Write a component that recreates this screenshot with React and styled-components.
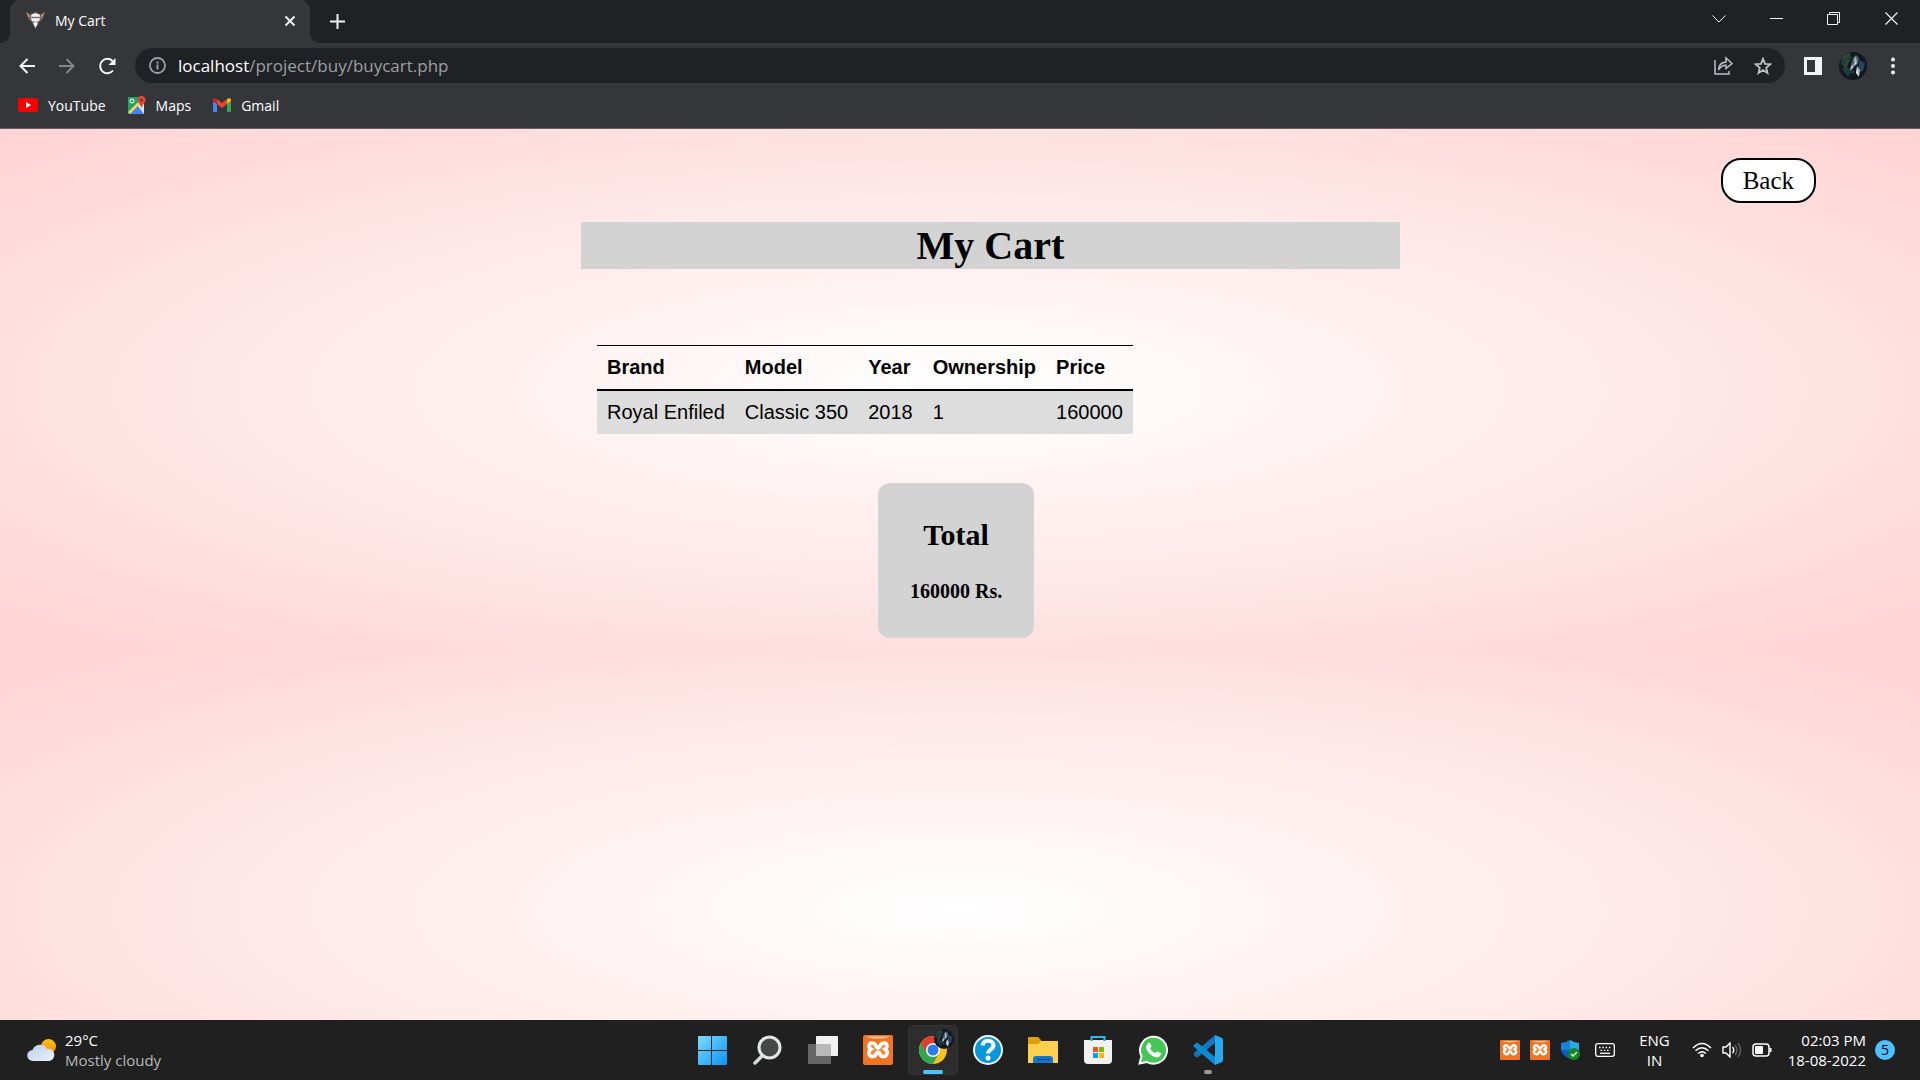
import React from "react";
import styled, { createGlobalStyle } from "styled-components";

const ui = '"Open Sans", "Noto Sans", sans-serif';
const serif = '"Liberation Serif", "Times New Roman", serif';
const sans = '"Liberation Sans", Arial, sans-serif';

const Global = createGlobalStyle`
  * { box-sizing: border-box; }
  body { margin: 0; background: #202124; }
  button { border: 0; background: none; padding: 0; font: inherit; color: inherit; cursor: pointer; }
  a { color: inherit; text-decoration: none; }
  h1, h2, p { margin: 0; }
  svg { display: block; flex: none; }
`;

const Screen = styled.div`
  min-height: 100vh;
  display: flex;
  flex-direction: column;
  font-family: ${ui};
`;

const TabStrip = styled.header`
  display: flex;
  align-items: stretch;
  height: 43px;
  padding-left: 10px;
  background: #202124;
  color: #fff;
`;

const Tab = styled.div`
  position: relative;
  display: flex;
  align-items: center;
  gap: 10px;
  width: 300px;
  padding: 0 11px 2px 16px;
  border-radius: 10px 10px 0 0;
  background: #35363a;
  font-size: 14px;
  &::before, &::after {
    content: "";
    position: absolute;
    bottom: 0;
    width: 10px;
    height: 10px;
  }
  &::before { left: -10px; background: radial-gradient(circle at 0 0, transparent 10px, #35363a 10px); }
  &::after { right: -10px; background: radial-gradient(circle at 100% 0, transparent 10px, #35363a 10px); }
`;

const TabTitle = styled.span`
  flex: 1;
`;

const IconButton = styled.button`
  display: grid;
  place-items: center;
  width: ${(p) => p.$w || 40}px;
  height: ${(p) => p.$h || 32}px;
  color: ${(p) => p.$color || "#f1f3f4"};
`;

const WindowControls = styled.div`
  display: flex;
  margin-left: auto;
`;

const Toolbar = styled.div`
  display: flex;
  align-items: center;
  height: 45px;
  padding: 0 7px;
  background: #35363a;
`;

const Address = styled.div`
  flex: 1;
  display: flex;
  align-items: center;
  height: 35px;
  margin: 0 8px;
  padding: 0 2px 0 14px;
  border-radius: 18px;
  background: #202124;
`;

const Url = styled.p`
  flex: 1;
  margin-left: 12px;
  font-size: 17px;
  line-height: 24px;
  color: #9aa0a6;
  b { font-weight: 400; color: #fff; }
`;

const Bookmarks = styled.nav`
  display: flex;
  align-items: center;
  gap: 22px;
  height: 41px;
  padding: 0 18px 6px;
  border-bottom: 1px solid #5f6265;
  background: #35363a;
  color: #fff;
  font-size: 14px;
`;

const Bookmark = styled.a`
  display: flex;
  align-items: center;
  gap: 10px;
`;

const Page = styled.main`
  flex: 1;
  display: flex;
  flex-direction: column;
  padding: 29px 8px 0;
  background: radial-gradient(#ffffff, #ffd3d3) 0 0 / 100% 520px repeat;
  font-family: ${serif};
  color: #000;
`;

const BackLink = styled.a`
  align-self: flex-end;
  margin-right: 96px;
  padding: 6px 20px;
  border: 2px solid #000;
  border-radius: 20px;
  background: #fff;
  font-size: 25px;
  line-height: 29px;
`;

const Title = styled.h1`
  width: 43%;
  margin: 19px 0 0 573px;
  background: lightgray;
  font-size: 40px;
  line-height: 47px;
  text-align: center;
`;

const CartTable = styled.table`
  align-self: flex-start;
  margin: 76px 0 0 589px;
  border-spacing: 0;
  font-family: ${sans};
  font-size: 20px;
  line-height: 23px;
  th, td { padding: 10px; text-align: left; }
  th { border-top: 1px solid #000; border-bottom: 2px solid #000; }
  td { background: #ddd; }
`;

const TotalCard = styled.section`
  align-self: flex-start;
  margin: 49px 0 0 870px;
  padding: 34px 32px 35px;
  border-radius: 12px;
  background: lightgray;
  text-align: center;
  h2 { font-size: 30px; line-height: 35px; }
  p { margin-top: 27px; font-size: 20px; line-height: 24px; font-weight: 700; }
`;

const Taskbar = styled.footer`
  display: grid;
  grid-template-columns: 1fr auto 1fr;
  align-items: center;
  height: 60px;
  background: #202020;
  color: #fff;
  font-size: 15px;
  line-height: 20px;
`;

const Weather = styled.button`
  display: flex;
  align-items: center;
  gap: 8px;
  padding-left: 27px;
  text-align: left;
`;

const Muted = styled.span`
  color: #b8b8b8;
`;

const Stack = styled.span`
  display: flex;
  flex-direction: column;
  text-align: ${(p) => p.$align || "left"};
`;

const Apps = styled.div`
  display: flex;
  gap: 5px;
`;

const AppButton = styled.button`
  position: relative;
  display: grid;
  place-items: center;
  width: 50px;
  height: 50px;
  border-radius: 5px;
  background: ${(p) => (p.$active ? "#2d2d2d" : "transparent")};
  box-shadow: ${(p) => (p.$active ? "inset 0 0 0 1px #353535" : "none")};
  &::after {
    content: "";
    position: absolute;
    bottom: 1px;
    width: ${(p) => (p.$active ? 20 : p.$running ? 8 : 0)}px;
    height: 4px;
    border-radius: 2px;
    background: ${(p) => (p.$active ? "#4cc2ff" : "#9a9a9a")};
  }
`;

const Tray = styled.div`
  display: flex;
  align-items: center;
  justify-content: flex-end;
  gap: 9px;
  padding-right: 25px;
`;

const TrayGroup = styled.div`
  display: flex;
  align-items: center;
  gap: 10px;
  margin-left: ${(p) => p.$start || 0}px;
  margin-right: ${(p) => p.$end || 0}px;
`;

const Badge = styled.span`
  display: grid;
  place-items: center;
  width: 20px;
  height: 20px;
  border-radius: 50%;
  background: #4cc2ff;
  color: #000;
  font-size: 14px;
`;

const Svg = ({ s = 20, w, h, box, children }) => (
  <svg width={w || s} height={h || s} viewBox={box || `0 0 ${w || s} ${h || s}`} fill="none" aria-hidden="true">{children}</svg>
);

const Avatar = ({ s }) => (
  <Svg s={s} box="0 0 28 28">
    <defs><clipPath id={`av${s}`}><circle cx="14" cy="14" r="14" /></clipPath></defs>
    <g clipPath={`url(#av${s})`}>
      <path fill="#101820" d="M0 0h28v28H0z" />
      <path fill="#1d3c40" d="M2 5l8-4 3 5-5 5-6 2zM3 17l5-3 4 6-3 5z" />
      <path fill="#33452f" d="M3 3l9-2-2 4-5 2zM4 12l4-2 1 4-4 2z" />
      <path fill="#28425e" d="M20 8l6 3-2 8-5 2z" />
      <path fill="#50656f" d="M14 6l3-3 3 3-1 5-3 3-5 5 1-6z" />
      <path fill="#a9b9c3" d="M16 4l2 5-1 3-2-3zM18 14l3 4-1 6-3-4zM12 14l3-2-1 4-3 3z" />
      <path fill="#e2e9ee" d="M18 17l1 3 1 5-3-4zM16 10l2 2-3 1z" />
      <path fill="#3b5236" d="M8 8l3 1-3 3zM12 20l3-2-1 4z" />
    </g>
  </Svg>
);

const Xampp = ({ s }) => (
  <Svg s={s} box="0 0 30 30">
    <rect width="30" height="30" rx="2" fill="#ef7524" />
    <path d="M4 1.500h22q-2 2-11 2T4 1.500z" fill="#ffc59d" />
    <path d="M11 8.500C6 6 4.500 12 8 14c-4 3-2 8 2.500 7.500C14 21 12.500 17 15 17s1 4 4.500 4.500C24 22 26 17 22 14c3.500-2 2-8-3-5.500-3 1-1.500 4.500-4 4.500s-1-3.500-4-4.500z" fill="#f58a43" stroke="#fff" strokeWidth="3.500" />
  </Svg>
);

const Chrome = () => (
  <Svg s={30} box="-1 1 30 30">
    <circle cx="14" cy="16" r="14" fill="#fbc116" />
    <path d="M14 16L1.900 9A14 14 0 0 0 14 30l6-10.500z" fill="#2da94f" />
    <path d="M1.900 9A14 14 0 0 1 26.100 9H14v7l-6 3.500z" fill="#e33b2e" />
    <circle cx="14" cy="16" r="7" fill="#fff" />
    <circle cx="14" cy="16" r="5.500" fill="#2a7de9" />
  </Svg>
);

const ChromeAvatar = styled.span`
  position: absolute;
  top: 4px;
  right: 4px;
`;

export default function App() {
  return (
    <Screen>
      <Global />
      <TabStrip>
        <Tab>
          <Svg s={19} box="0 0 19 19">
            <path fill="#b88765" d="M0 1l5 3 1 5-4-3zM19 1l-5 3-1 5 4-3z" />
            <path fill="#8d6a55" d="M2 6l3 2 1 3-3-2zM17 6l-3 2-1 3 3-2z" />
            <path fill="#554d58" d="M4.500 3l5-3 5 3 1 4-2.500 5-3.500 6.500L6 12 3.500 7z" />
            <path fill="#f2f2f2" d="M5.500 3.500l4-1.500 4 1.500 1 3-1.500 4h-7l-1.500-4zM7 12l2.500-1.500L12 12l-2.500 5z" />
            <path stroke="#77717a" strokeWidth="1.500" d="M5 6.500h9" />
          </Svg>
          <TabTitle>My Cart</TabTitle>
          <IconButton $w={18} $h={18} aria-label="Close tab">
            <Svg s={12}><path d="M1.500 1.500l9 9m0-9l-9 9" stroke="currentColor" strokeWidth="2" /></Svg>
          </IconButton>
        </Tab>
        <IconButton $w={54} $h={42} aria-label="New tab">
          <Svg s={15}><path d="M7.500 0v15M0 7.500h15" stroke="currentColor" strokeWidth="2" /></Svg>
        </IconButton>
        <WindowControls>
          <IconButton $w={58} $h={37} aria-label="Search tabs"><Svg w={14} h={8}><path d="M.5.5L7 7 13.500.5" stroke="currentColor" /></Svg></IconButton>
          <IconButton $w={57} $h={37} aria-label="Minimize"><Svg w={13} h={1}><path d="M0 .5h13" stroke="currentColor" /></Svg></IconButton>
          <IconButton $w={57} $h={37} aria-label="Restore"><Svg s={13}><path d="M.5 2.500h10v10H.5zM2.500 2.500v-2h10v10h-2" stroke="currentColor" /></Svg></IconButton>
          <IconButton $w={58} $h={37} aria-label="Close"><Svg s={13}><path d="M.5.5l12 12m0-12l-12 12" stroke="currentColor" strokeWidth="1.200" /></Svg></IconButton>
        </WindowControls>
      </TabStrip>
      <Toolbar>
        <IconButton aria-label="Back"><Svg s={16}><path d="M16 8H1.500M8.500 1l-7 7 7 7" stroke="currentColor" strokeWidth="2" /></Svg></IconButton>
        <IconButton $color="#85868a" aria-label="Forward"><Svg s={16}><path d="M0 8h14.500M7.500 1l7 7-7 7" stroke="currentColor" strokeWidth="2" /></Svg></IconButton>
        <IconButton aria-label="Reload"><Svg s={18}><path d="M15 13.500A7.200 7.200 0 1 1 14.500 4" stroke="currentColor" strokeWidth="2" /><path d="M17.500 1v7h-7z" fill="currentColor" /></Svg></IconButton>
        <Address>
          <Svg s={17}><circle cx="8.500" cy="8.500" r="7.500" stroke="#9aa0a6" strokeWidth="1.800" /><path d="M8.500 7.500v5M8.500 4.500v2" stroke="#9aa0a6" strokeWidth="2" /></Svg>
          <Url><b>localhost</b>/project/buy/buycart.php</Url>
          <IconButton $color="#bdc1c6" aria-label="Share"><Svg s={19}><path d="M1 4v14h14v-3" stroke="currentColor" strokeWidth="1.500" /><path d="M4.500 14c.2-5 2.500-7.500 7.500-8V2l6 5.500-6 5V9.200c-3.500 0-5.500 1.300-7.500 4.800z" stroke="currentColor" strokeWidth="1.500" /></Svg></IconButton>
          <IconButton $color="#bdc1c6" aria-label="Bookmark"><Svg s={18}><path d="M9 1.800l2 5 5.300.4-4.100 3.500 1.300 5.300L9 13.100 4.500 16l1.300-5.300-4.100-3.500L7 6.800z" stroke="currentColor" strokeWidth="1.800" /></Svg></IconButton>
        </Address>
        <IconButton aria-label="Side panel"><Svg s={18}><path d="M0 0h18v18H0zM3 3v12h8V3z" fillRule="evenodd" fill="currentColor" /></Svg></IconButton>
        <IconButton aria-label="Profile"><Avatar s={28} /></IconButton>
        <IconButton aria-label="Menu"><Svg w={4} h={18}><g fill="currentColor"><circle cx="2" cy="2.500" r="2" /><circle cx="2" cy="9" r="2" /><circle cx="2" cy="15.500" r="2" /></g></Svg></IconButton>
      </Toolbar>
      <Bookmarks>
        <Bookmark href="#youtube"><Svg w={20} h={14}><rect width="20" height="14" rx="3" fill="#f00" /><path d="M8 4l5 3-5 3z" fill="#fff" /></Svg>YouTube</Bookmark>
        <Bookmark href="#maps"><Svg s={18}><path fill="#1fa463" d="M0 1h16v17H0z" /><path fill="#4285f4" d="M9 9l7 9H1z" /><path fill="#dfe3e8" d="M9 9l7-2v11z" /><path stroke="#ffd54b" strokeWidth="2.500" d="M1 17L12 6" /><circle cx="4" cy="5" r="2" stroke="#fff" /><path fill="#dd4b3e" d="M13.500 0A4 4 0 0 0 9.500 4c0 3 3 4 4 8 1-4 4-5 4-8a4 4 0 0 0-4-4z" /><circle cx="13.500" cy="4" r="1.500" fill="#822b23" /></Svg>Maps</Bookmark>
        <Bookmark href="#gmail"><Svg w={18} h={14}><path fill="#4285f4" d="M0 3l4 3v8H1q-1 0-1-1z" /><path fill="#34a853" d="M18 3l-4 3v8h3q1 0 1-1z" /><path fill="#ea4335" d="M4 1l5 4 5-4v5l-5 4-5-4z" /><path fill="#c5221f" d="M0 2c0-2 2-2.500 4-1v5L0 3z" /><path fill="#fbbc04" d="M18 2c0-2-2-2.500-4-1v5l4-3z" /></Svg>Gmail</Bookmark>
      </Bookmarks>
      <Page>
        <BackLink href="#back">Back</BackLink>
        <Title>My Cart</Title>
        <CartTable>
          <thead><tr><th>Brand</th><th>Model</th><th>Year</th><th>Ownership</th><th>Price</th></tr></thead>
          <tbody><tr><td>Royal Enfiled</td><td>Classic 350</td><td>2018</td><td>1</td><td>160000</td></tr></tbody>
        </CartTable>
        <TotalCard><h2>Total</h2><p>160000 Rs.</p></TotalCard>
      </Page>
      <Taskbar>
        <Weather>
          <Svg w={30} h={24}>
            <defs><linearGradient id="cloud" x2="1" y2="1"><stop stopColor="#b9cdec" /><stop offset="1" stopColor="#edf3fb" /></linearGradient><linearGradient id="sun" x2="0" y2="1"><stop stopColor="#ffc21a" /><stop offset="1" stopColor="#f38a06" /></linearGradient></defs>
            <circle cx="21.500" cy="8.500" r="7.500" fill="url(#sun)" />
            <path d="M6 23a5.500 5.500 0 0 1-.5-11A8 8 0 0 1 20 11a6 6 0 0 1 2.500 12z" fill="url(#cloud)" />
          </Svg>
          <Stack><span>29°C</span><Muted>Mostly cloudy</Muted></Stack>
        </Weather>
        <Apps>
          <AppButton aria-label="Start"><Svg s={30} box="1 0 30 30"><defs><linearGradient id="win" x2="1" y2="1"><stop stopColor="#7bdcff" /><stop offset="1" stopColor="#0c93f5" /></linearGradient></defs><path fill="url(#win)" d="M1 2q0-1 1-1h12v14H1zM15 1h14q1 0 1 1v13H15zM1 16h13v14H2q-1 0-1-1zM15 16h15v13q0 1-1 1H15z" /></Svg></AppButton>
          <AppButton aria-label="Search"><Svg s={30}><path d="M9 21l-7 7" stroke="#d4d9dc" strokeWidth="3.500" strokeLinecap="round" /><circle cx="16.500" cy="12.500" r="10.500" fill="#474747" stroke="#e3e6e8" strokeWidth="3" /></Svg></AppButton>
          <AppButton aria-label="Task view"><Svg s={30}><rect y="9" width="23" height="20" rx="1" fill="#666" /><rect x="8" y="1" width="22" height="20" rx="1" fill="#f1f1f1" /><path fill="#b9b9b9" d="M8 9h15v12H8z" /></Svg></AppButton>
          <AppButton aria-label="XAMPP"><Xampp s={30} /></AppButton>
          <AppButton $active aria-label="Chrome"><Chrome /><ChromeAvatar><Avatar s={20} /></ChromeAvatar></AppButton>
          <AppButton aria-label="Help"><Svg s={30}><circle cx="15" cy="15" r="14" fill="#0795dc" stroke="#eef5f8" strokeWidth="2" /><path d="M9.500 10.500C10 4 20.500 4.500 20.500 10.500c0 4-5.500 4-5.500 8" stroke="#fff" strokeWidth="4" /><circle cx="15" cy="23" r="2.500" fill="#fff" /></Svg></AppButton>
          <AppButton aria-label="File Explorer"><Svg w={30} h={28}><path fill="#e1a008" d="M0 2q0-1 1-1h9l3 3v6H0z" /><path fill="#ffd04c" d="M0 8h10l3-3h17v22H0z" /><path fill="#1377cf" d="M5 27v-4q0-3 3-3h14q3 0 3 3v4z" /><path stroke="#084d91" strokeWidth="1.500" d="M9 23.500h13" /></Svg></AppButton>
          <AppButton aria-label="Microsoft Store"><Svg s={30}><path d="M8.500 7V2h13v5" stroke="#24bdf2" strokeWidth="2" /><path fill="#f1f1f1" d="M1 5h28v20q0 4-4 4H5q-4 0-4-4z" /><path fill="#1a9fdc" d="M7.500 4h2v2h-2zM20.500 4h2v2h-2z" /><path fill="#f25022" d="M10 12h5v5h-5z" /><path fill="#7fba00" d="M16 12h5v5h-5z" /><path fill="#00a4ef" d="M10 18h5v5h-5z" /><path fill="#ffb900" d="M16 18h5v5h-5z" /></Svg></AppButton>
          <AppButton aria-label="WhatsApp"><Svg s={30}><path fill="#45c656" stroke="#fff" strokeWidth="2" d="M1.500 28.500l2-7.200A13.500 13.500 0 1 1 9 27z" /><path fill="#fff" d="M10.500 8c1-.5 1.500-.3 2 .8l1 2.400c.2.700-1.500 2-1.200 2.600 1.200 2.200 2.800 3.500 4.800 4.300.7.200 1.700-2 2.500-1.600l3 1.600c1 .7-.4 3.500-2 4-3 1-8-1.600-10.300-4.900C7.500 13.500 7.500 10 10.500 8z" /></Svg></AppButton>
          <AppButton $running aria-label="Visual Studio Code"><Svg s={30}><path fill="#1177bd" d="M22 0L1 18q-1 1 0 2l2 2q1 .5 2 0L22 8z" /><path fill="#0c8ad4" d="M22 30L1 12q-1-1 0-2l2-2q1-.5 2 0l17 14z" /><path fill="#29a9ed" d="M22 0l7 3q1 .5 1 2v20q0 1.500-1 2l-7 3z" /></Svg></AppButton>
        </Apps>
        <Tray>
          <TrayGroup $end={6}>
            <Xampp s={20} /><Xampp s={20} />
            <Svg s={20}><path fill="#28a8ea" d="M10 0q5 3 9 3v7h-9z" /><path fill="#1683d8" d="M1 3q4 0 9-3v10H1z" /><path fill="#0c61bb" d="M1 10h18c-1 4-4 7-9 9-5-2-8-5-9-9z" /><circle cx="14" cy="14" r="6" fill="#0f8a1f" /><path d="M11 14l2 2 4-4" stroke="#fff" strokeWidth="1.400" /></Svg>
          </TrayGroup>
          <TrayGroup $end={15}>
            <Svg w={20} h={14}><rect x=".7" y=".7" width="18.600" height="12.600" rx="2" stroke="#fff" strokeWidth="1.300" /><path stroke="#fff" strokeWidth="1.300" strokeDasharray="1.500 1.800" d="M4 4.500h13M5.500 7.300h10" /><path stroke="#fff" strokeWidth="1.300" d="M5 10.300h10" /></Svg>
          </TrayGroup>
          <Stack $align="center"><span>ENG</span><span>IN</span></Stack>
          <TrayGroup $start={13} $end={7}>
            <Svg w={20} h={16}><path d="M1 6q9-9 18 0M3.500 8.800q6.500-6 13 0M6.200 11.500q3.800-3.500 7.600 0" stroke="#fff" strokeWidth="1.500" /><circle cx="10" cy="13.500" r="1.800" fill="#fff" /></Svg>
            <Svg w={20} h={16}><path d="M1 5h3l4-4v14l-4-4H1z" stroke="#fff" strokeWidth="1.400" /><path d="M10.500 5q2.500 3 0 6" stroke="#fff" strokeWidth="1.400" /><path d="M13 3q4 5 0 10M16 1q5 7 0 14" stroke="#666" strokeWidth="1.300" /></Svg>
            <Svg w={20} h={14}><rect x="1" y="1" width="16" height="12" rx="3" stroke="#fff" strokeWidth="1.500" /><rect x="3" y="3" width="8" height="8" rx="1" fill="#fff" /><path d="M18.500 5v4" stroke="#fff" strokeWidth="2" /></Svg>
          </TrayGroup>
          <Stack $align="right"><span>02:03 PM</span><span>18-08-2022</span></Stack>
          <Badge>5</Badge>
        </Tray>
      </Taskbar>
    </Screen>
  );
}
